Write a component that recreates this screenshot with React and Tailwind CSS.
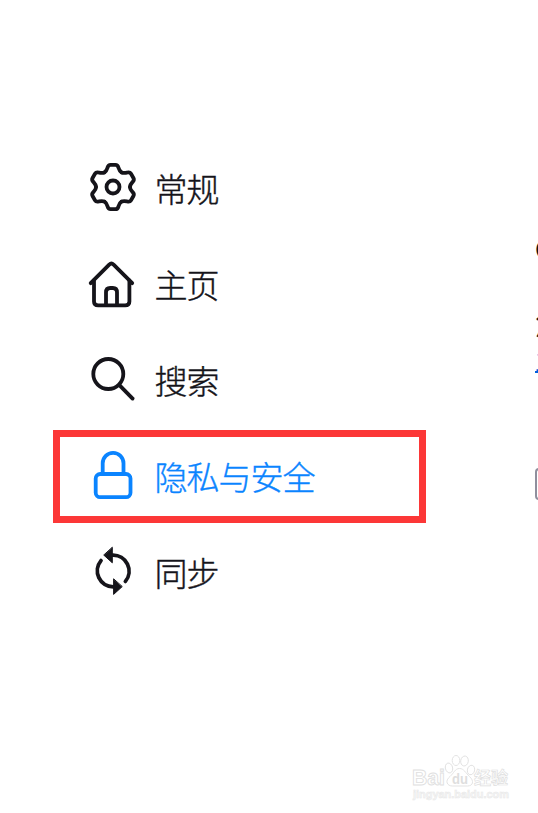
const NAV_ITEMS = [
  { id: 'general', label: '常规', icon: GearIcon },
  { id: 'home', label: '主页', icon: HomeIcon },
  { id: 'search', label: '搜索', icon: SearchIcon },
  { id: 'privacy', label: '隐私与安全', icon: LockIcon, active: true },
  { id: 'sync', label: '同步', icon: SyncIcon },
];

function Icon({ children }) {
  return (
    <svg viewBox="0 0 48 48" className="size-12 flex-none overflow-visible" fill="none" stroke="currentColor" strokeWidth="3.8" strokeLinecap="round" strokeLinejoin="round">
      {children}
    </svg>
  );
}

function GearIcon() {
  return (
    <Icon>
      {[0, 60, 120, 180, 240, 300].map((angle) => (
        <path key={angle} transform={`rotate(${angle} 24 24)`} d="M15.5 9.3C17.6 8.1 18 6.4 18.6 4.4C19.1 2.6 19.9 1.8 21.6 1.8H26.4C28.1 1.8 28.9 2.6 29.4 4.4C30 6.4 30.4 8.1 32.5 9.3" />
      ))}
      <circle cx="24" cy="24" r="6.5" />
    </Icon>
  );
}

function HomeIcon() {
  return (
    <Icon>
      <path d="M1.7 24.2L20.2 5.6Q22.4 3.6 24.6 5.6L43.2 24.2" />
      <path d="M5 21.5V42.5Q5 46.4 9.2 46.4H36.2Q40.4 46.4 40.4 42.5V21.5" />
      <path d="M17 46V33.5Q17 29 21.2 29H23.8Q28 29 28 33.5V46" />
    </Icon>
  );
}

function SearchIcon() {
  return (
    <Icon>
      <circle cx="19.3" cy="19" r="15" />
      <path d="M30.4 30.2L43.6 43.6" />
    </Icon>
  );
}

function LockIcon() {
  return (
    <Icon>
      <rect x="6.7" y="23" width="34.8" height="23.2" rx="4.5" />
      <path d="M13.7 22V12.2A10.4 10.4 0 0 1 34.5 12.2V22" />
    </Icon>
  );
}

function SyncIcon() {
  return (
    <Icon>
      <path d="M12 13.6A16 16 0 0 0 24.300 39.800" />
      <path d="M23.500 8.200A16 16 0 0 1 36.400 34.400" />
      <path strokeWidth="1" fill="currentColor" d="M23.3 0.6V15.8L15 8.3Z" />
      <path strokeWidth="1" fill="currentColor" d="M24.6 32.2V47.4L33 39.8Z" />
    </Icon>
  );
}

function Watermark() {
  return (
    <div className="absolute top-[755px] left-[411px] h-[48px] w-[100px]">
      <svg viewBox="0 0 100 48" className="size-full" fill="#fff" stroke="#e0e0e0" strokeWidth="0.9" fontFamily="'Liberation Sans', 'Noto Sans CJK SC', sans-serif" fontWeight="700">
        <text x="1" y="30" fontSize="22" textLength="33" lengthAdjust="spacingAndGlyphs">Bai</text>
        <ellipse cx="38" cy="13" rx="3.6" ry="5" transform="rotate(-15 38 13)" />
        <ellipse cx="45" cy="5.5" rx="3.8" ry="5" />
        <ellipse cx="53.5" cy="6" rx="3.8" ry="5" transform="rotate(10 53.5 6)" />
        <ellipse cx="60" cy="15" rx="3.6" ry="4.8" transform="rotate(15 60 15)" />
        <path d="M48.5 13.5C44 13.5 43 18 39 21.5C33.5 26 36 31 41.5 31H56.5C62 31 63.5 26 58.5 21.5C54.5 18 53 13.5 48.5 13.5Z" />
        <text x="41" y="28.5" fontSize="14" fill="#dedede" stroke="none" textLength="16" lengthAdjust="spacingAndGlyphs">du</text>
        <text x="63" y="29" fontSize="17" strokeWidth="0.7" textLength="34" lengthAdjust="spacingAndGlyphs">经验</text>
        <text x="2" y="43" fontSize="11" fill="#f6f6f6" strokeWidth="0.5" stroke="#e8e8e8" textLength="96" lengthAdjust="spacingAndGlyphs">jingyan.baidu.com</text>
      </svg>
    </div>
  );
}

export default function App() {
  return (
    <div className="relative flex h-[813px] w-[538px] overflow-hidden bg-white font-['Noto_Sans_CJK_SC',sans-serif] text-[#15141a]">
      <nav className="w-[535px] flex-none pt-[139px] pl-[89px]">
        {NAV_ITEMS.map(({ id, label, icon: NavIcon, active }) => (
          <div key={id} className={`flex h-24 items-center gap-[17.5px] ${active ? 'text-[#0a84ff]' : ''}`}>
            <NavIcon />
            <span className="pt-[2px] text-[33px] leading-none font-light tracking-[-1px] whitespace-nowrap [-webkit-text-stroke:0.4px]">{label}</span>
          </div>
        ))}
      </nav>

      {/* Settings pane, only its left edge is in view */}
      <main className="w-[400px] flex-none pt-[233px]">
        <h2 className="text-[25px] leading-[30px] font-medium">Cookie</h2>
        <p className="mt-[43px] text-[30px] leading-[32px]">您</p>
        <a className="mt-[11px] block w-10 border-b-2 border-[#0060df] text-[22px] leading-[22px] text-[#0060df]">三</a>
        <div className="mt-[95px] size-8 rounded-[4px] border-2 border-[#8f8f9d]" />
      </main>

      <div className="absolute top-[430px] left-[53px] h-[93px] w-[373px] border-7 border-[#fc3737]" />
      <Watermark />
    </div>
  );
}
